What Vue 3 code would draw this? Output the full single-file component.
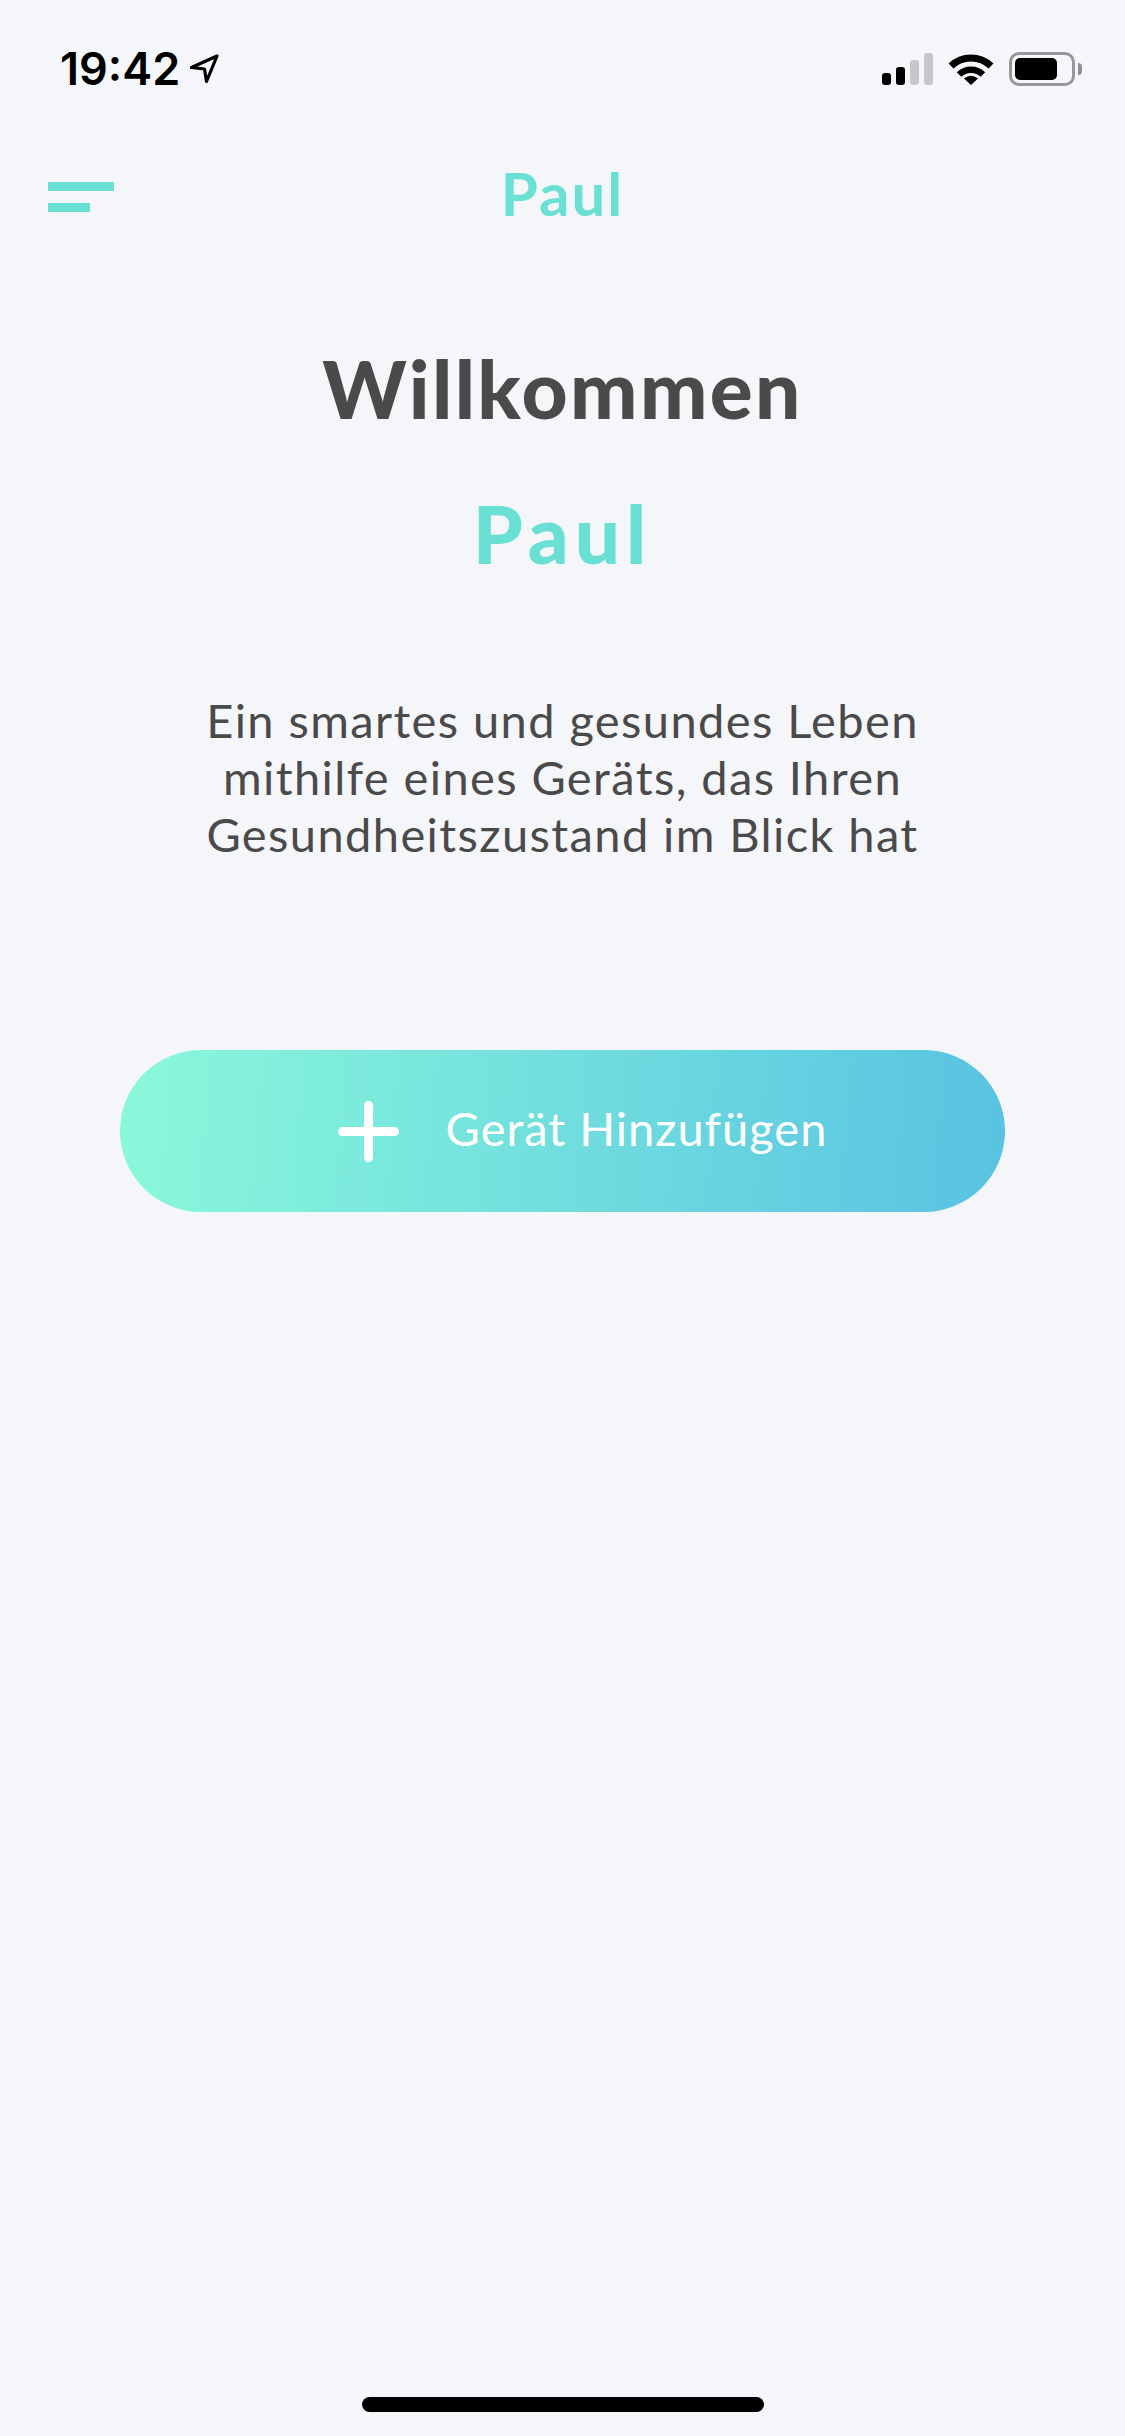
<script setup>
const title = 'Paul'
</script>

<template>
  <div class="page">
    <div class="status-bar">
      <div class="time-wrap">
        <span class="time">19:42</span>
        <svg class="arrow" width="30" height="30" viewBox="0 0 30 30">
          <path d="M28 2 L2.5 13.5 L15.5 15 L17.5 27.5 Z" fill="none" stroke="#000" stroke-width="3.2" stroke-linejoin="round" />
        </svg>
      </div>
      <div class="indicators">
        <div class="signal">
          <i class="bar b1"></i>
          <i class="bar b2"></i>
          <i class="bar b3"></i>
          <i class="bar b4"></i>
        </div>
        <svg class="wifi" width="46" height="33" viewBox="0 0 46 33">
          <path d="M3 14 A 29 29 0 0 1 43 14" fill="none" stroke="#000" stroke-width="7" />
          <path d="M11 22.5 A 17.5 17.5 0 0 1 35 22.5" fill="none" stroke="#000" stroke-width="6.5" />
          <path d="M16 26.5 Q23 21 30 26.5 L23 33 Z" fill="#000" />
        </svg>
        <div class="battery">
          <div class="battery-body"><div class="battery-fill"></div></div>
          <div class="battery-nub"></div>
        </div>
      </div>
    </div>

    <div class="nav">
      <div class="menu">
        <span class="line long"></span>
        <span class="line short"></span>
      </div>
      <div class="nav-title">{{ title }}</div>
    </div>

    <h1 class="welcome">Willkommen</h1>
    <div class="name">{{ title }}</div>
    <p class="intro">
      Ein smartes und gesundes Leben<br>
      mithilfe eines Geräts, das Ihren<br>
      Gesundheitszustand im Blick hat
    </p>

    <button class="add-btn">
      <svg width="61" height="61" viewBox="0 0 61 61">
        <path d="M4.5 30.5 H56.5 M30.5 4.5 V56.5" stroke="#fff" stroke-width="9" stroke-linecap="round" />
      </svg>
      <span class="add-label">Gerät Hinzufügen</span>
    </button>

    <div class="home-indicator"></div>
  </div>
</template>

<style>
html,
body {
  margin: 0;
  background: #f5f6fa;
}
</style>

<style scoped>
.page {
  width: 1125px;
  height: 2436px;
  display: flex;
  flex-direction: column;
  align-items: center;
  background: #f5f6fa;
  font-family: Lato, "Open Sans", sans-serif;
  overflow: hidden;
}

.status-bar {
  width: 100%;
  box-sizing: border-box;
  height: 158px;
  padding: 52px 43px 0 60px;
  display: flex;
  justify-content: space-between;
  align-items: flex-start;
}

.time-wrap {
  display: flex;
  align-items: flex-start;
  gap: 9px;
}

.time {
  font-family: Inter, sans-serif;
  font-size: 45px;
  font-weight: 600;
  line-height: 33px;
  color: #000;
}

.arrow {
  margin-top: 2px;
}

.indicators {
  display: flex;
  align-items: flex-start;
  gap: 15px;
}

.signal {
  height: 33px;
  display: flex;
  align-items: flex-end;
  gap: 5px;
}

.bar {
  width: 9px;
  border-radius: 3px;
  background: #000;
}

.b1 {
  height: 12px;
}

.b2 {
  height: 18px;
}

.b3 {
  height: 25px;
  background: #c7c7c9;
}

.b4 {
  height: 32px;
  background: #c7c7c9;
}

.battery {
  display: flex;
  align-items: center;
  gap: 3px;
}

.battery-body {
  width: 66px;
  height: 34px;
  box-sizing: border-box;
  border: 3px solid #97979a;
  border-radius: 10px;
  padding: 3px;
}

.battery-fill {
  width: 42px;
  height: 22px;
  border-radius: 5px;
  background: #000;
}

.battery-nub {
  width: 4px;
  height: 12px;
  border-radius: 0 4px 4px 0;
  background: #8e8e91;
}

.nav {
  width: 100%;
  height: 76px;
  position: relative;
  display: flex;
  justify-content: center;
  align-items: center;
}

.menu {
  position: absolute;
  left: 48px;
  top: 24px;
  display: flex;
  flex-direction: column;
  gap: 12px;
}

.line {
  display: block;
  height: 9px;
  background: #6adfd3;
}

.long {
  width: 66px;
}

.short {
  width: 42px;
}

.nav-title {
  padding-bottom: 6px;
  font-size: 60px;
  font-weight: 700;
  line-height: 70px;
  letter-spacing: 2px;
  color: #6adfd3;
}

.welcome {
  margin: 107px 0 0;
  font-size: 80px;
  font-weight: 900;
  line-height: 94px;
  letter-spacing: 2.4px;
  color: #4a4a4a;
}

.name {
  margin-top: 51px;
  font-size: 80px;
  font-weight: 900;
  line-height: 94px;
  letter-spacing: 6px;
  color: #6adfd3;
}

.intro {
  margin: 112px 0 0;
  font-size: 47px;
  line-height: 57px;
  letter-spacing: 1.4px;
  text-align: center;
  color: #4a4a4a;
}

.add-btn {
  margin-top: 187px;
  width: 885px;
  height: 162px;
  padding: 0 0 0 40px;
  border: 0;
  border-radius: 81px;
  display: flex;
  justify-content: center;
  align-items: center;
  gap: 47px;
  background: linear-gradient(95deg, #8af9da 0%, #58c2e2 100%);
  font-family: inherit;
  font-size: 47px;
  letter-spacing: 1px;
  color: #fff;
}

.add-label {
  padding-bottom: 6px;
}

.home-indicator {
  margin-top: auto;
  margin-bottom: 24px;
  width: 402px;
  height: 15px;
  border-radius: 8px;
  background: #000;
}
</style>
